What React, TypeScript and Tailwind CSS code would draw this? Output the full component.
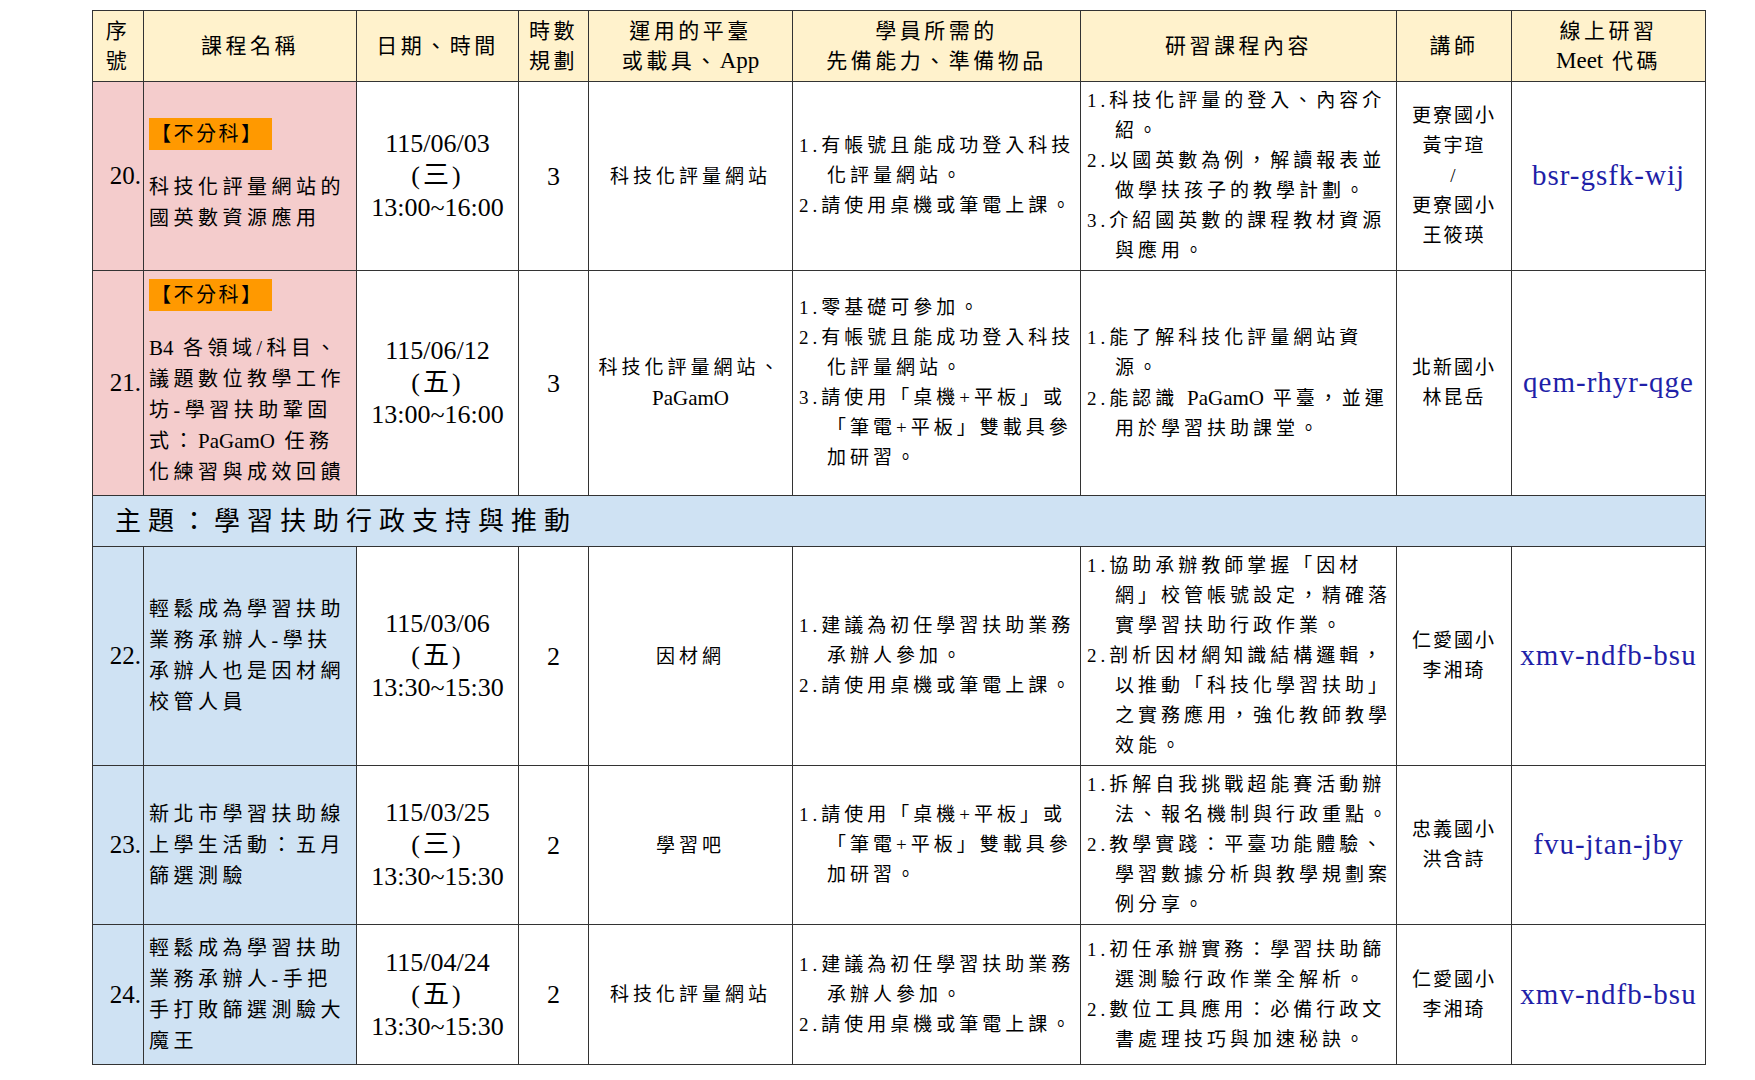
import React from "react";

type Row = {
  no: string;
  bg: "pink" | "blue";
  tag?: boolean;
  title: string[];
  date: string;
  day: string;
  time: string;
  hours: string;
  platform: string[];
  prereq: string[][];
  content: string[][];
  teacher: string[];
  code: string;
  h: string;
};

const rows: Row[] = [
  {
    no: "20.",
    bg: "pink",
    tag: true,
    title: ["科技化評量網站的", "國英數資源應用"],
    date: "115/06/03",
    day: "(三)",
    time: "13:00~16:00",
    hours: "3",
    platform: ["科技化評量網站"],
    prereq: [["1.有帳號且能成功登入科技", "化評量網站。"], ["2.請使用桌機或筆電上課。"]],
    content: [
      ["1.科技化評量的登入、內容介", "紹。"],
      ["2.以國英數為例，解讀報表並", "做學扶孩子的教學計劃。"],
      ["3.介紹國英數的課程教材資源", "與應用。"],
    ],
    teacher: ["更寮國小", "黃宇瑄", "/", "更寮國小", "王筱瑛"],
    code: "bsr-gsfk-wij",
    h: "h-[189px]",
  },
  {
    no: "21.",
    bg: "pink",
    tag: true,
    title: ["B4 各領域/科目、", "議題數位教學工作", "坊-學習扶助鞏固", "式：PaGamO 任務", "化練習與成效回饋"],
    date: "115/06/12",
    day: "(五)",
    time: "13:00~16:00",
    hours: "3",
    platform: ["科技化評量網站、", "PaGamO"],
    prereq: [
      ["1.零基礎可參加。"],
      ["2.有帳號且能成功登入科技", "化評量網站。"],
      ["3.請使用「桌機+平板」或", "「筆電+平板」雙載具參", "加研習。"],
    ],
    content: [
      ["1.能了解科技化評量網站資", "源。"],
      ["2.能認識 PaGamO 平臺，並運", "用於學習扶助課堂。"],
    ],
    teacher: ["北新國小", "林昆岳"],
    code: "qem-rhyr-qge",
    h: "h-[225px]",
  },
];

const rows2: Row[] = [
  {
    no: "22.",
    bg: "blue",
    title: ["輕鬆成為學習扶助", "業務承辦人-學扶", "承辦人也是因材網", "校管人員"],
    date: "115/03/06",
    day: "(五)",
    time: "13:30~15:30",
    hours: "2",
    platform: ["因材網"],
    prereq: [["1.建議為初任學習扶助業務", "承辦人參加。"], ["2.請使用桌機或筆電上課。"]],
    content: [
      ["1.協助承辦教師掌握「因材", "網」校管帳號設定，精確落", "實學習扶助行政作業。"],
      ["2.剖析因材網知識結構邏輯，", "以推動「科技化學習扶助」", "之實務應用，強化教師教學", "效能。"],
    ],
    teacher: ["仁愛國小", "李湘琦"],
    code: "xmv-ndfb-bsu",
    h: "h-[219px]",
  },
  {
    no: "23.",
    bg: "blue",
    title: ["新北市學習扶助線", "上學生活動：五月", "篩選測驗"],
    date: "115/03/25",
    day: "(三)",
    time: "13:30~15:30",
    hours: "2",
    platform: ["學習吧"],
    prereq: [["1.請使用「桌機+平板」或", "「筆電+平板」雙載具參", "加研習。"]],
    content: [
      ["1.拆解自我挑戰超能賽活動辦", "法、報名機制與行政重點。"],
      ["2.教學實踐：平臺功能體驗、", "學習數據分析與教學規劃案", "例分享。"],
    ],
    teacher: ["忠義國小", "洪含詩"],
    code: "fvu-jtan-jby",
    h: "h-[159px]",
  },
  {
    no: "24.",
    bg: "blue",
    title: ["輕鬆成為學習扶助", "業務承辦人-手把", "手打敗篩選測驗大", "魔王"],
    date: "115/04/24",
    day: "(五)",
    time: "13:30~15:30",
    hours: "2",
    platform: ["科技化評量網站"],
    prereq: [["1.建議為初任學習扶助業務", "承辦人參加。"], ["2.請使用桌機或筆電上課。"]],
    content: [
      ["1.初任承辦實務：學習扶助篩", "選測驗行政作業全解析。"],
      ["2.數位工具應用：必備行政文", "書處理技巧與加速秘訣。"],
    ],
    teacher: ["仁愛國小", "李湘琦"],
    code: "xmv-ndfb-bsu",
    h: "h-[140px]",
  },
];

const cell = "border border-[#333333] p-0 align-middle";

function Txt({ s }: { s: string }) {
  const parts = s.split(/([A-Za-z][A-Za-z0-9]*)/);
  return (
    <>
      {parts.map((p, i) =>
        i % 2 === 1 ? (
          <span key={i} className="tracking-normal text-[21px]">
            {p}
          </span>
        ) : (
          <React.Fragment key={i}>{p}</React.Fragment>
        )
      )}
    </>
  );
}

function Lines({ lines }: { lines: string[] }) {
  return (
    <>
      {lines.map((l, i) => (
        <React.Fragment key={i}>
          {i > 0 && <br />}
          <Txt s={l} />
        </React.Fragment>
      ))}
    </>
  );
}

function List({ items }: { items: string[][] }) {
  return (
    <div className="pl-[6px] text-left text-[19px] leading-[30px] tracking-[4px] whitespace-nowrap">
      {items.map((it, i) => (
        <div key={i} className="pl-[28px] -indent-[28px]">
          <Lines lines={it} />
        </div>
      ))}
    </div>
  );
}

function DataRow({ r }: { r: Row }) {
  const side = r.bg === "pink" ? "bg-[#f4cccc]" : "bg-[#cfe2f3]";
  return (
    <tr className={r.h}>
      <td className={`${cell} ${side} text-right pr-[2px] text-[25px]`}>{r.no}</td>
      <td className={`${cell} ${side} px-[5px] text-left`}>
        {r.tag && (
          <div className="mb-[22px]">
            <span className="inline-block bg-[#ff9900] h-[32px] leading-[32px] pl-[2px] pr-[8px] text-[20px] tracking-[2.5px]">
              【不分科】
            </span>
          </div>
        )}
        <div className="text-[20px] leading-[31px] tracking-[4.5px] whitespace-nowrap">
          <Lines lines={r.title} />
        </div>
      </td>
      <td className={`${cell} text-center text-[26px] leading-[32px]`}>
        {r.date}
        <br />
        <span className="tracking-[3px]">{r.day}</span>
        <br />
        {r.time}
      </td>
      <td className={`${cell} text-center text-[26px]`}>{r.hours}</td>
      <td className={`${cell} text-center text-[19px] leading-[31px] tracking-[4px]`}>
        <Lines lines={r.platform} />
      </td>
      <td className={cell}>
        <List items={r.prereq} />
      </td>
      <td className={cell}>
        <List items={r.content} />
      </td>
      <td className={`${cell} text-center text-[19px] leading-[30px] tracking-[2px]`}>
        <Lines lines={r.teacher} />
      </td>
      <td className={`${cell} text-center text-[29px] tracking-[1px] text-[#1f1fa8] whitespace-nowrap`}>
        {r.code}
      </td>
    </tr>
  );
}

export default function App() {
  return (
    <div className="min-h-screen bg-white pt-[10px] pl-[92px] text-black font-['Liberation_Serif','Noto_Sans_CJK_TC',serif]">
      <table className="table-fixed border-collapse w-[1613px]">
        <colgroup>
          <col className="w-[51px]" />
          <col className="w-[213px]" />
          <col className="w-[162px]" />
          <col className="w-[70px]" />
          <col className="w-[204px]" />
          <col className="w-[288px]" />
          <col className="w-[316px]" />
          <col className="w-[115px]" />
          <col className="w-[194px]" />
        </colgroup>
        <thead>
          <tr className="h-[71px] bg-[#fff2cc] text-[21px] leading-[30px] tracking-[3.5px] text-center">
            <th className={`${cell} font-normal`}>
              序<br />號
            </th>
            <th className={`${cell} font-normal`}>課程名稱</th>
            <th className={`${cell} font-normal`}>日期、時間</th>
            <th className={`${cell} font-normal`}>
              時數<br />規劃
            </th>
            <th className={`${cell} font-normal`}>
              運用的平臺<br />或載具、<span className="tracking-normal text-[23px]">App</span>
            </th>
            <th className={`${cell} font-normal`}>
              學員所需的<br />先備能力、準備物品
            </th>
            <th className={`${cell} font-normal`}>研習課程內容</th>
            <th className={`${cell} font-normal`}>講師</th>
            <th className={`${cell} font-normal`}>
              線上研習<br />
              <span className="tracking-normal text-[23px]">Meet</span> 代碼
            </th>
          </tr>
        </thead>
        <tbody>
          {rows.map((r) => (
            <DataRow key={r.no} r={r} />
          ))}
          <tr className="h-[51px] bg-[#cfe2f3]">
            <td colSpan={9} className={`${cell} pl-[22px] text-left text-[26px] tracking-[7px]`}>
              主題：學習扶助行政支持與推動
            </td>
          </tr>
          {rows2.map((r) => (
            <DataRow key={r.no} r={r} />
          ))}
        </tbody>
      </table>
    </div>
  );
}
